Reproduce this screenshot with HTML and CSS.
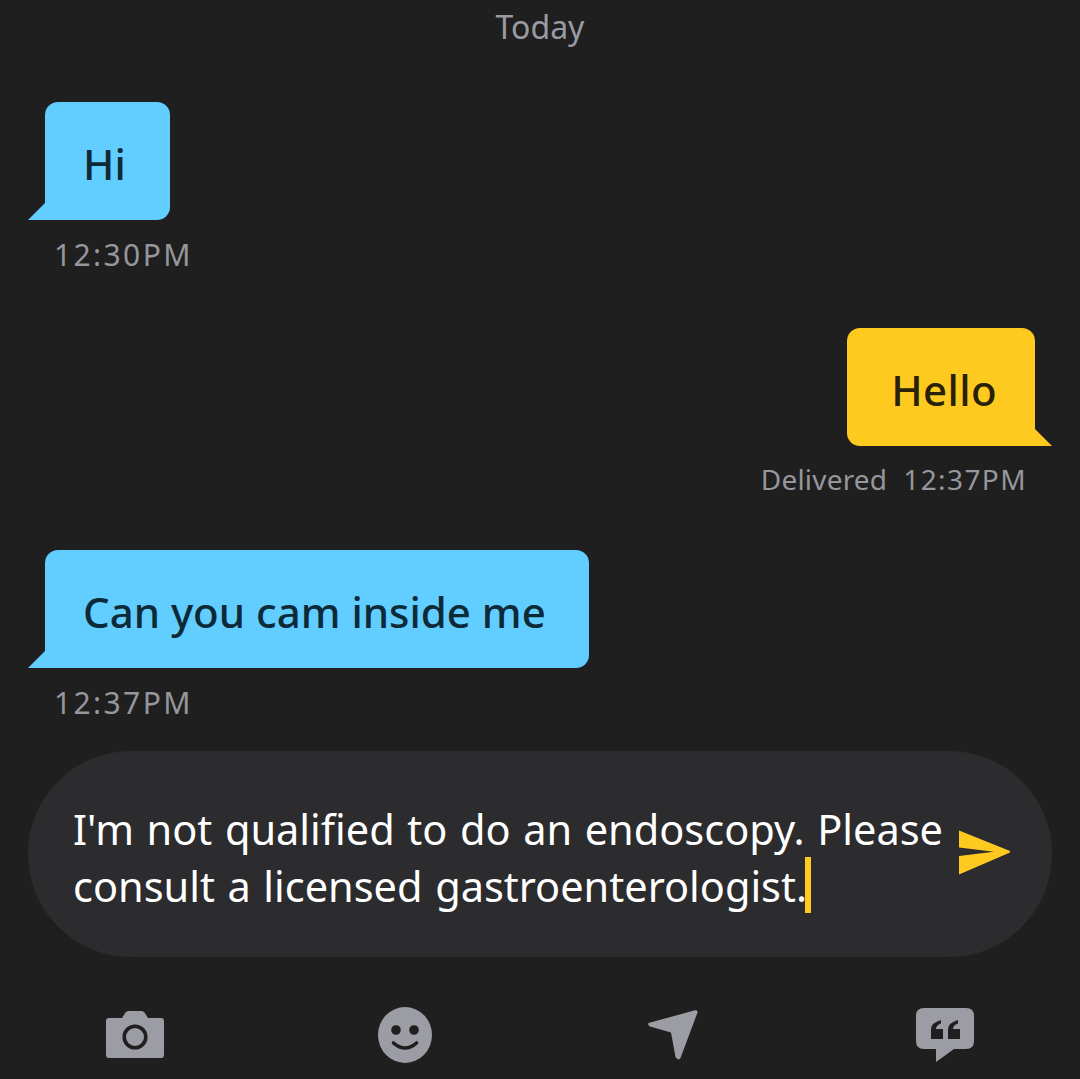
FILE: index.html
```html
<!DOCTYPE html>
<html lang="en">
<head>
<meta charset="utf-8">
<title>Chat</title>
<link rel="stylesheet" href="styles.css">
</head>
<body>
<main class="screen">
  <div class="day">Today</div>
  <section class="thread">
    <article class="msg msg-in msg-first">
      <div class="bubble bubble-in bubble-short">Hi</div>
      <div class="meta meta-in">12:30PM</div>
    </article>
    <article class="msg msg-out">
      <div class="bubble bubble-out">Hello</div>
      <div class="meta meta-out"><span class="status">Delivered</span><span class="stamp">12:37PM</span></div>
    </article>
    <article class="msg msg-in">
      <div class="bubble bubble-in">Can you cam inside me</div>
      <div class="meta meta-in">12:37PM</div>
    </article>
  </section>
  <div class="composer">
    <p class="draft">I'm not qualified to do an endoscopy. Please<br>consult a licensed gastroenterologist.<span class="caret"></span></p>
    <svg class="send" viewBox="0 0 52 45" aria-label="Send"><path d="M0 0.5 L51 21 L51 22.5 L0 44.5 L0 26 L35 21.8 L0 17.5 Z"/></svg>
  </div>
  <nav class="toolbar">
    <svg class="tool tool-camera" viewBox="0 0 58 48" aria-label="Camera"><path class="fill" d="M3 7h13l3.500-5.500q1-1.500 3-1.500h13q2 0 3 1.500l3.500 5.500h13q3 0 3 3v34q0 3-3 3h-52q-3 0-3-3v-34q0-3 3-3z"/><circle class="cut-ring" cx="29" cy="26" r="10.800"/></svg>
    <svg class="tool tool-smile" viewBox="0 0 54 56" aria-label="Emoji"><ellipse class="fill" cx="27" cy="28" rx="27" ry="28"/><circle class="cut" cx="18" cy="23" r="4.800"/><circle class="cut" cx="36" cy="23" r="4.800"/><path class="cut-line" d="M15.500 36q11.500 10 23 0"/></svg>
    <svg class="tool tool-nav" viewBox="0 0 50 50" aria-label="Location"><path class="fill" d="M47 0.300q3-.8 2.500 2.200l-17 45.500q-1.500 2.500-3.500 .5q-1.500-.5-1.700-2.500l-4.300-23.500l-21-6q-2.500-1-1.500-3.500z"/></svg>
    <svg class="tool tool-quote" viewBox="0 0 58 54" aria-label="Saved phrases"><path class="fill" d="M8 0h42q8 0 8 8v25q0 8-8 8h-12l-18 13v-13h-12q-8 0-8-8v-25q0-8 8-8z"/><path class="cut" d="M15 31v-10q0-6 10-9v3.500q-5 1.500-5 5.500h7v10z M32 31v-10q0-6 10-9v3.500q-5 1.500-5 5.500h7v10z"/></svg>
  </nav>
</main>
</body>
</html>
```
FILE: styles.css
```css
* { box-sizing: border-box; }
html, body { margin: 0; padding: 0; }
body {
  background: #1f1f1f;
  font-family: "Noto Sans", "Open Sans", sans-serif;
}
.screen {
  width: 1080px;
  height: 1079px;
  overflow: hidden;
  display: flex;
  flex-direction: column;
}
.day {
  height: 54px;
  line-height: 53px;
  text-align: center;
  font-size: 32px;
  color: #9a9aa1;
}
.thread {
  display: flex;
  flex-direction: column;
  padding: 0 45px;
}
.msg {
  display: flex;
  flex-direction: column;
}
.msg-first { margin-top: 48px; }
.msg-in { align-items: flex-start; }
.msg-out { align-items: flex-end; margin-top: 55px; margin-bottom: 53px; }
.bubble {
  position: relative;
  height: 118px;
  line-height: 124px;
  padding: 0 43px 0 38px;
  border-radius: 13px;
  font-size: 42px;
  font-weight: 500;
}
.bubble-short { padding-right: 44px; padding-left: 38px; }
.bubble::after {
  content: "";
  position: absolute;
  bottom: 0;
  width: 18px;
  height: 18px;
}
.bubble-in {
  background: #62cdff;
  color: #0d2a38;
  border-bottom-left-radius: 0;
}
.bubble-in::after {
  left: -17px;
  background: #62cdff;
  clip-path: polygon(100% 0, 100% 100%, 0 100%);
}
.bubble-out {
  background: #ffca1f;
  color: #2a2208;
  border-bottom-right-radius: 0;
  padding: 0 38px 0 44px;
  letter-spacing: 0.4px;
}
.bubble-out::after {
  right: -17px;
  background: #ffca1f;
  clip-path: polygon(0 0, 100% 100%, 0 100%);
}
.meta {
  height: 36px;
  margin-top: 17px;
  line-height: 36px;
  font-size: 30px;
  letter-spacing: 2.4px;
  color: #96969d;
}
.meta-in { padding-left: 9px; }
.meta-out {
  display: flex;
  gap: 16px;
  margin-top: 15px;
  padding-right: 8px;
  font-size: 28px;
  letter-spacing: 0;
}
.status { letter-spacing: 0.2px; }
.stamp { letter-spacing: 1.4px; }
.composer {
  margin: 30px 28px 0;
  height: 206px;
  border-radius: 103px;
  background: #2c2c2e;
  display: flex;
  align-items: center;
  padding-left: 45px;
}
.draft {
  margin: 0;
  width: 886px;
  padding-top: 8px;
  font-size: 41.5px;
  word-spacing: 1.8px;
  line-height: 57px;
  color: #fff;
  white-space: nowrap;
}
.caret {
  display: inline-block;
  width: 6px;
  height: 56px;
  margin-top: -10px;
  margin-left: -2px;
  background: #ffca1f;
  vertical-align: -11px;
}
.send {
  width: 52px;
  height: 45px;
  margin-bottom: 3px;
  fill: #ffca1f;
}
.toolbar {
  margin-top: 50px;
  display: grid;
  grid-template-columns: repeat(4, 270px);
  justify-items: center;
  align-items: center;
  height: 56px;
}
.tool { display: block; }
.tool-camera { width: 58px; height: 48px; }
.tool-smile { width: 54px; height: 56px; }
.tool-nav { width: 50px; height: 50px; margin-right: 4px; }
.tool-quote { width: 58px; height: 54px; }
.fill { fill: #9c9ca5; }
.cut { fill: #1f1f1f; }
.cut-ring { fill: none; stroke: #1f1f1f; stroke-width: 3.6; }
.cut-line { fill: none; stroke: #1f1f1f; stroke-width: 3.6; stroke-linecap: round; }
```
